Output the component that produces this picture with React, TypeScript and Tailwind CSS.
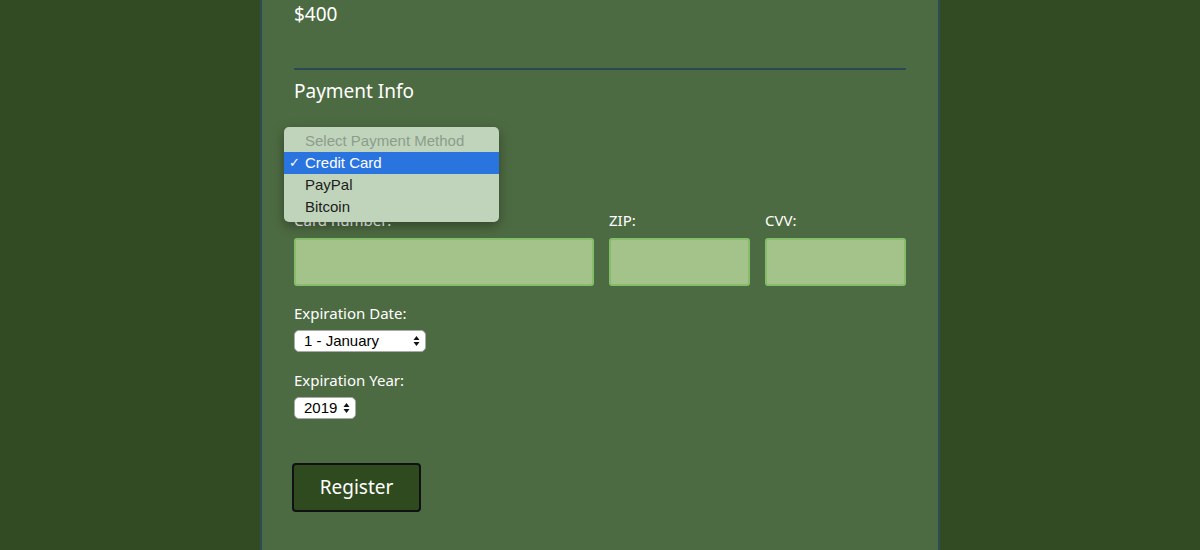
const months = ["1 - January"];

const SelectArrows = () => (
  <svg width="7" height="11" viewBox="0 0 7 11" className="pointer-events-none absolute right-[6px] top-1/2 -translate-y-1/2">
    <path d="M3.5 0.5 L6.5 4.5 H0.5 Z" fill="#111" />
    <path d="M3.5 10.5 L6.5 6.5 H0.5 Z" fill="#111" />
  </svg>
);

const PaymentPopup = () => (
  <div className="absolute left-[-10px] top-[22px] z-10 w-[215px] rounded-[5px] bg-[#c0d4bc] pt-[3px] pb-[4px] shadow-[0_4px_12px_rgba(0,0,0,0.35)] font-['Liberation_Sans',sans-serif] text-[15px]">
    <div className="h-[22px] pl-[21px] leading-[22px] text-[#8c9d8a]">Select Payment Method</div>
    <div className="relative h-[22px] bg-[#2a74e0] pl-[21px] leading-[22px] text-white">
      <span className="absolute left-[5px] text-[13px]">✓</span>
      Credit Card
    </div>
    <div className="h-[22px] pl-[21px] leading-[22px] text-[#1c211b]">PayPal</div>
    <div className="h-[22px] pl-[21px] leading-[22px] text-[#1c211b]">Bitcoin</div>
  </div>
);

const App = () => {
  return (
    <div className="flex h-[550px] w-full justify-center overflow-hidden bg-[#334b22] font-['Noto_Sans',sans-serif] text-white">
      <div className="w-[680px] border-x-2 border-[#2b4d56] bg-[#4d6b42] px-8">
        <p className="text-[19px] leading-7">$400</p>
        <hr className="mt-10 border-t-2 border-[#2b4a55]" />
        <h3 className="mt-[7px] text-[19px] leading-7">Payment Info</h3>

        <div className="relative h-[105px]">
          <PaymentPopup />
        </div>

        {/* Card fields */}
        <div className="flex gap-[15px]">
          <div className="flex w-[300px] shrink-0 flex-col">
            <label className="text-[15px] leading-5">Card number:</label>
            <input className="mt-2 block h-12 w-full rounded-[3px] border-2 border-[#86bd6b] bg-[#a3c38a]" />
          </div>
          <div className="flex min-w-0 flex-1 flex-col">
            <label className="text-[15px] leading-5">ZIP:</label>
            <input className="mt-2 block h-12 w-full min-w-0 rounded-[3px] border-2 border-[#86bd6b] bg-[#a3c38a]" />
          </div>
          <div className="flex min-w-0 flex-1 flex-col">
            <label className="text-[15px] leading-5">CVV:</label>
            <input className="mt-2 block h-12 w-full min-w-0 rounded-[3px] border-2 border-[#86bd6b] bg-[#a3c38a]" />
          </div>
        </div>

        <p className="mt-[17px] text-[15px] leading-5">Expiration Date:</p>
        <div className="relative mt-[7px] w-[132px]">
          <select className="block h-[22px] w-full appearance-none rounded-[5px] border border-[#aaa] bg-white pl-[9px] font-['Liberation_Sans',sans-serif] text-[15px] leading-[20px] text-black">
            {months.map((m) => (
              <option key={m}>{m}</option>
            ))}
          </select>
          <SelectArrows />
        </div>

        <p className="mt-[18px] text-[15px] leading-5">Expiration Year:</p>
        <div className="relative mt-[7px] w-[62px]">
          <select className="block h-[22px] w-full appearance-none rounded-[5px] border border-[#aaa] bg-white pl-[9px] font-['Liberation_Sans',sans-serif] text-[15px] leading-[20px] text-black">
            <option>2019</option>
          </select>
          <SelectArrows />
        </div>

        <button className="ml-[-2px] mt-[44px] block h-[49px] w-[129px] rounded-[4px] border-2 border-[#111] bg-[#2f4a1f] text-[19px] text-white">
          Register
        </button>
      </div>
    </div>
  );
};

export default App;
